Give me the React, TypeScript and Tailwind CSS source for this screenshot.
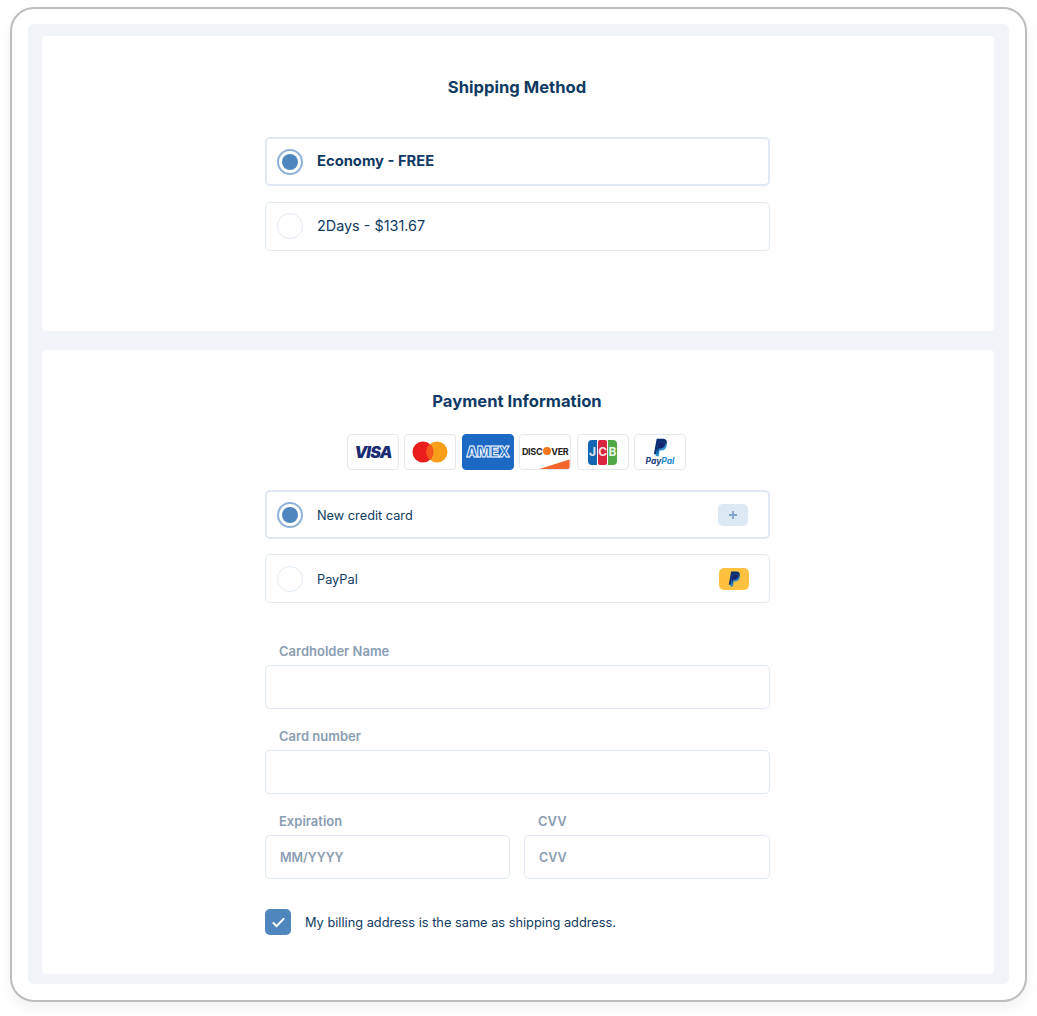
const navy = "text-[#0f3a63]";

const Radio = ({ checked }: { checked?: boolean }) => (
  <span
    className={
      checked
        ? "flex h-[26px] w-[26px] shrink-0 items-center justify-center rounded-full border-2 border-[#8fb2d8] bg-white"
        : "h-[26px] w-[26px] shrink-0 rounded-full border border-[#e3ebf4] bg-white"
    }
  >
    {checked && <span className="h-[16px] w-[16px] rounded-full bg-[#4f86bd]" />}
  </span>
);

const PayPalMark = ({ className }: { className: string }) => (
  <svg viewBox="0 0 24 28" className={className}>
    <path d="M7 1h9c4.500 0 7 2.600 6.200 6.800C21.300 12.800 18 15.500 13.500 15.500H10.200L8.800 24H2.800Z" fill="#0b2f72" />
    <path d="M9.500 6h7.500c3.300 0 5.500 1.800 5 5.300-.7 4.600-3.800 7.200-8 7.200h-2.600L10.300 27H5.200Z" fill="#1a8ad0" opacity="0.9" />
    <path d="M9.500 6h6.700c1.800 0 3.300.4 4.300 1.300-.9 5-4 8.200-8 8.200h-2.300L8.800 24 8 15Z" fill="#17246b" />
  </svg>
);

const Option = ({ label, checked, big, right }: { label: string; checked?: boolean; big?: boolean; right?: React.ReactNode }) => (
  <div
    className={`flex h-[49px] items-center rounded-[5px] bg-white pr-[20px] ${
      checked ? "border-2 border-[#dfe8f3] pl-[10px]" : "border border-[#e1e9f3] pl-[11px]"
    } ${big && !checked ? "pb-[2px]" : ""}`}
  >
    <Radio checked={checked} />
    <span
      className={`ml-[14px] flex-1 ${navy} ${
        big ? (checked ? "text-[14.75px] font-bold" : "text-[14.4px]") : "pt-[2px] text-[12.75px]"
      }`}
    >
      {label}
    </span>
    {right}
  </div>
);

const Field = ({ label, placeholder, className }: { label: string; placeholder?: string; className?: string }) => (
  <div className={className}>
    <div className="h-[20px] pl-[14px] text-[13px] leading-[12px] font-semibold text-[#8a9db2]">{label}</div>
    <div className="flex h-[44px] items-center rounded-[5px] border border-[#e1e9f3] bg-white pt-[2px] pl-[14px] text-[12.5px] font-semibold text-[#8a9db2]">
      {placeholder}
    </div>
  </div>
);

const CardBox = ({ children, className = "border-[#e4e7ec] bg-white" }: { children?: React.ReactNode; className?: string }) => (
  <div className={`relative flex h-[36px] w-[52px] items-center justify-center overflow-hidden rounded-[4px] border ${className}`}>
    {children}
  </div>
);

const CardLogos = () => (
  <div className="mt-[22px] flex justify-center gap-[5.4px] pr-[3px]">
    <CardBox>
      <span className="text-[16px] leading-none font-black tracking-[-0.8px] text-[#1a2c73] italic">VISA</span>
    </CardBox>
    <CardBox>
      <svg viewBox="0 0 36 24" className="h-[24px] w-[36px]">
        <circle cx="11" cy="12" r="10.500" fill="#eb1c1c" />
        <circle cx="25" cy="12" r="10.500" fill="#f79e1b" />
        <path d="M18 4.100a10.500 10.500 0 0 1 0 15.800 10.500 10.500 0 0 1 0-15.800Z" fill="#f4581f" />
      </svg>
    </CardBox>
    <CardBox className="border-[#1c69c4] bg-[#1c69c4]">
      <span className="text-[14px] leading-none font-black tracking-[-0.2px] text-[#1c69c4] [-webkit-text-stroke:0.9px_white]">AMEX</span>
    </CardBox>
    <CardBox>
      <span className="z-10 -mt-[2px] flex items-center text-[9px] leading-none font-bold tracking-[-0.3px] text-[#1d1d1d]">
        DISC<span className="mx-[0.5px] h-[8px] w-[8px] rounded-full bg-[#f4761f]" />VER
      </span>
      <svg viewBox="0 0 52 36" className="absolute inset-0 h-full w-full">
        <path d="M20 36 52 26v10Z" fill="#f4652b" />
      </svg>
    </CardBox>
    <CardBox>
      <div className="flex h-[25px] w-[29px] gap-[1px]">
        <span className="flex flex-1 items-center justify-center rounded-l-[4px] bg-[#1565b5] text-[12px] font-bold text-white/85">J</span>
        <span className="flex flex-1 items-center justify-center rounded-[2px] bg-[#d8243f] text-[12px] font-bold text-white/85">C</span>
        <span className="flex flex-1 items-center justify-center rounded-r-[4px] bg-[#4fa845] text-[12px] font-bold text-white/85">B</span>
      </div>
    </CardBox>
    <CardBox>
      <div className="flex flex-col items-center">
        <PayPalMark className="h-[19px] w-[16px]" />
        <span className="text-[8.500px] leading-none font-bold text-[#1a3a80] italic">
          Pay<span className="text-[#1a8ad0]">Pal</span>
        </span>
      </div>
    </CardBox>
  </div>
);

export default function App() {
  return (
    <div className="h-[1016px] w-[1037px] bg-white pt-[7px] pl-[10px] font-['Inter','Liberation_Sans',sans-serif]">
      <div className="h-[995px] w-[1017px] rounded-[24px] border-2 border-[#bdbdbd] bg-white px-[16px] pt-[15px] shadow-[0_6px_14px_rgba(0,0,0,0.06)]">
        <div className="flex h-[960px] w-[981px] flex-col gap-[19px] rounded-[6px] bg-[#f1f5f9] pt-[12px] pr-[15px] pl-[14px]">
          <section className="h-[295px] rounded-[4px] bg-white pt-[40px]">
            <h2 className={`h-[22px] pr-[2px] text-center text-[16.6px] leading-[22px] font-bold ${navy}`}>Shipping Method</h2>
            <div className="mt-[39px] ml-[223px] flex w-[505px] flex-col gap-[16px]">
              <Option label="Economy - FREE" checked big />
              <Option label="2Days - $131.67" big />
            </div>
          </section>
          <section className="h-[624px] rounded-[4px] bg-white pt-[40px]">
            <h2 className={`h-[22px] pr-[2px] text-center text-[16.6px] leading-[22px] font-bold ${navy}`}>Payment Information</h2>
            <CardLogos />
            <div className="mt-[20px] ml-[223px] w-[505px]">
              <div className="flex flex-col gap-[15px]">
                <Option
                  label="New credit card"
                  checked
                  right={
                    <span className="flex h-[22px] w-[30px] items-center justify-center rounded-[5px] bg-[#dde8f5]">
                      <svg viewBox="0 0 10 10" className="h-[10px] w-[10px]">
                        <path d="M5 1v8M1 5h8" stroke="#7da3cf" strokeWidth="1.800" fill="none" />
                      </svg>
                    </span>
                  }
                />
                <Option
                  label="PayPal"
                  right={
                    <span className="flex h-[22px] w-[30px] items-center justify-center rounded-[5px] bg-[#ffc13f]">
                      <PayPalMark className="h-[16px] w-[14px]" />
                    </span>
                  }
                />
              </div>
              <div className="mt-[42px] flex flex-col gap-[21px]">
                <Field label="Cardholder Name" />
                <Field label="Card number" />
                <div className="flex gap-[14px]">
                  <Field label="Expiration" placeholder="MM/YYYY" className="w-[245px]" />
                  <Field label="CVV" placeholder="CVV" className="w-[246px]" />
                </div>
              </div>
              <div className="mt-[30px] flex items-center">
                <span className="flex h-[26px] w-[26px] items-center justify-center rounded-[5px] bg-[#4f86bd]">
                  <svg viewBox="0 0 14 12" className="h-[11px] w-[13px]">
                    <path d="M1.500 6.500 5 10l7.500-8" stroke="white" strokeWidth="2.200" fill="none" strokeLinecap="round" strokeLinejoin="round" />
                  </svg>
                </span>
                <span className={`ml-[14px] pt-[2px] text-[12.8px] ${navy}`}>My billing address is the same as shipping address.</span>
              </div>
            </div>
          </section>
        </div>
      </div>
    </div>
  );
}
